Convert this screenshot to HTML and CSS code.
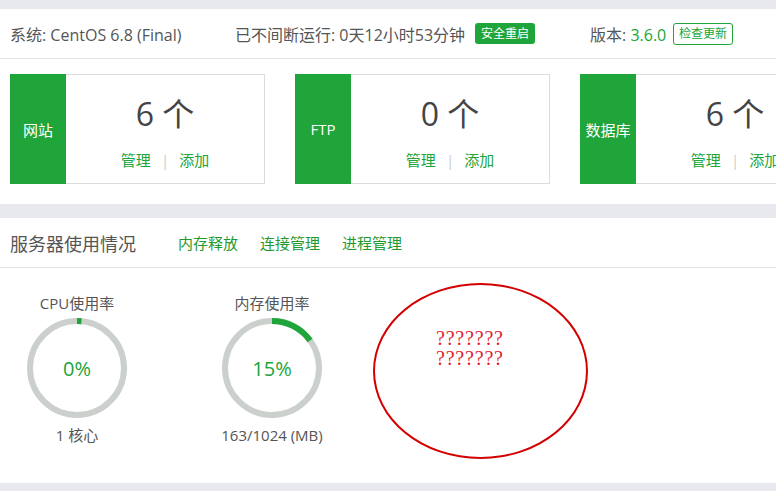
FILE: index.html
```html
<!DOCTYPE html>
<html lang="zh">
<head>
<meta charset="utf-8">
<link rel="stylesheet" href="styles.css">
</head>
<body>
<div class="page">
  <section class="panel">
    <div class="info-bar">
      <span class="info sys">系统: CentOS 6.8 (Final)</span>
      <span class="info uptime">已不间断运行: 0天12小时53分钟</span>
      <span class="btn-solid">安全重启</span>
      <span class="info ver">版本: <span class="green">3.6.0</span></span>
      <span class="btn-outline">检查更新</span>
    </div>
    <div class="cards">
      <div class="card">
        <div class="card-label">网站</div>
        <div class="card-body">
          <div class="count">6 个</div>
          <div class="card-links"><span>管理</span><span class="sep">|</span><span>添加</span></div>
        </div>
      </div>
      <div class="card">
        <div class="card-label">FTP</div>
        <div class="card-body">
          <div class="count">0 个</div>
          <div class="card-links"><span>管理</span><span class="sep">|</span><span>添加</span></div>
        </div>
      </div>
      <div class="card">
        <div class="card-label">数据库</div>
        <div class="card-body">
          <div class="count">6 个</div>
          <div class="card-links"><span>管理</span><span class="sep">|</span><span>添加</span></div>
        </div>
      </div>
    </div>
  </section>

  <section class="panel usage">
    <div class="usage-head">
      <span class="usage-title">服务器使用情况</span>
      <nav class="usage-links"><span>内存释放</span><span>连接管理</span><span>进程管理</span></nav>
    </div>
    <div class="gauges">
      <div class="gauge">
        <div class="g-label">CPU使用率</div>
        <div class="ring">
          <svg width="100" height="100" viewBox="0 0 100 100">
            <circle cx="50" cy="50" r="47" fill="none" stroke="#ccd0cc" stroke-width="6"/>
            <circle cx="50" cy="50" r="47" fill="none" stroke="#20a53a" stroke-width="6" stroke-dasharray="4.5 300" transform="rotate(-90 50 50)"/>
          </svg>
          <span class="pct">0%</span>
        </div>
        <div class="g-foot">1 核心</div>
      </div>
      <div class="gauge">
        <div class="g-label">内存使用率</div>
        <div class="ring">
          <svg width="100" height="100" viewBox="0 0 100 100">
            <circle cx="50" cy="50" r="47" fill="none" stroke="#ccd0cc" stroke-width="6"/>
            <circle cx="50" cy="50" r="47" fill="none" stroke="#20a53a" stroke-width="6" stroke-dasharray="44.3 300" transform="rotate(-90 50 50)"/>
          </svg>
          <span class="pct">15%</span>
        </div>
        <div class="g-foot">163/1024 (MB)</div>
      </div>
    </div>
    <div class="annot"><div class="annot-text">???????<br>???????</div></div>
  </section>
</div>
</body>
</html>
```
FILE: styles.css
```css
html, body {
  margin: 0;
  padding: 0;
}
body {
  background: #e7e9ee;
  font-family: "Open Sans", "Noto Sans CJK SC", sans-serif;
  color: #555;
  width: 776px;
  height: 491px;
  overflow: hidden;
}
.page {
  padding-top: 9px;
}
.panel {
  background: #fff;
}
.info-bar {
  height: 49px;
  border-bottom: 1px solid #e2e2e2;
  display: flex;
  align-items: center;
  padding-left: 10px;
  font-size: 16px;
  white-space: nowrap;
}
.info { color: #555; }
.sys { width: 225px; }
.uptime { width: 240px; }
.btn-solid {
  background: #20a53a;
  color: #fff;
  font-size: 12px;
  border-radius: 3px;
  height: 21px;
  line-height: 21px;
  padding: 0 6px;
}
.ver { margin-left: 55px; width: 83px; }
.green { color: #20a53a; }
.btn-outline {
  border: 1px solid #20a53a;
  color: #20a53a;
  font-size: 12px;
  border-radius: 3px;
  height: 20px;
  line-height: 20px;
  padding: 0 5px;
}
.cards {
  display: flex;
  gap: 30px;
  padding: 15px 0 20px 10px;
  overflow: hidden;
}
.card {
  flex: 0 0 255px;
  height: 110px;
  box-sizing: border-box;
  border: 1px solid #dcdcdc;
  display: flex;
}
.card-label {
  width: 56px;
  margin: -1px 0 -1px -1px;
  background: #20a53a;
  color: #fff;
  font-size: 15px;
  display: flex;
  align-items: center;
  justify-content: center;
}
.card-body {
  flex: 1;
  display: flex;
  flex-direction: column;
  align-items: center;
}
.count {
  margin-top: 19px;
  font-size: 32px;
  line-height: 40px;
  color: #444;
}
.card-links {
  margin-top: 16px;
  font-size: 15px;
  line-height: 20px;
  color: #20a53a;
  display: flex;
  gap: 10px;
}
.sep { color: #ccc; }
.usage {
  margin-top: 14px;
  height: 265px;
  position: relative;
}
.usage-head {
  height: 49px;
  border-bottom: 1px solid #e2e2e2;
  display: flex;
  align-items: center;
  padding-left: 10px;
}
.usage-title {
  font-size: 18px;
  color: #555;
  width: 168px;
}
.usage-links {
  display: flex;
  gap: 22px;
  font-size: 15px;
  color: #1f9a2d;
}
.gauges {
  display: flex;
  gap: 65px;
  padding: 26px 0 0 12px;
}
.gauge {
  width: 130px;
  display: flex;
  flex-direction: column;
  align-items: center;
  font-size: 15px;
}
.g-label { line-height: 18px; }
.ring {
  margin-top: 6px;
  width: 100px;
  height: 100px;
  position: relative;
}
.ring svg { display: block; }
.pct {
  position: absolute;
  inset: 0;
  display: flex;
  align-items: center;
  justify-content: center;
  color: #20a53a;
  font-size: 20px;
}
.g-foot {
  margin-top: 8px;
  line-height: 18px;
}
.annot {
  position: absolute;
  left: 373px;
  top: 65px;
  width: 215px;
  height: 176px;
  box-sizing: border-box;
  border: 2px solid #d40000;
  border-radius: 50%;
}
.annot-text {
  margin: 43px 0 0 61px;
  font-family: "Liberation Serif", serif;
  font-size: 20px;
  line-height: 20px;
  letter-spacing: 0.8px;
  color: #e0202a;
}
```
